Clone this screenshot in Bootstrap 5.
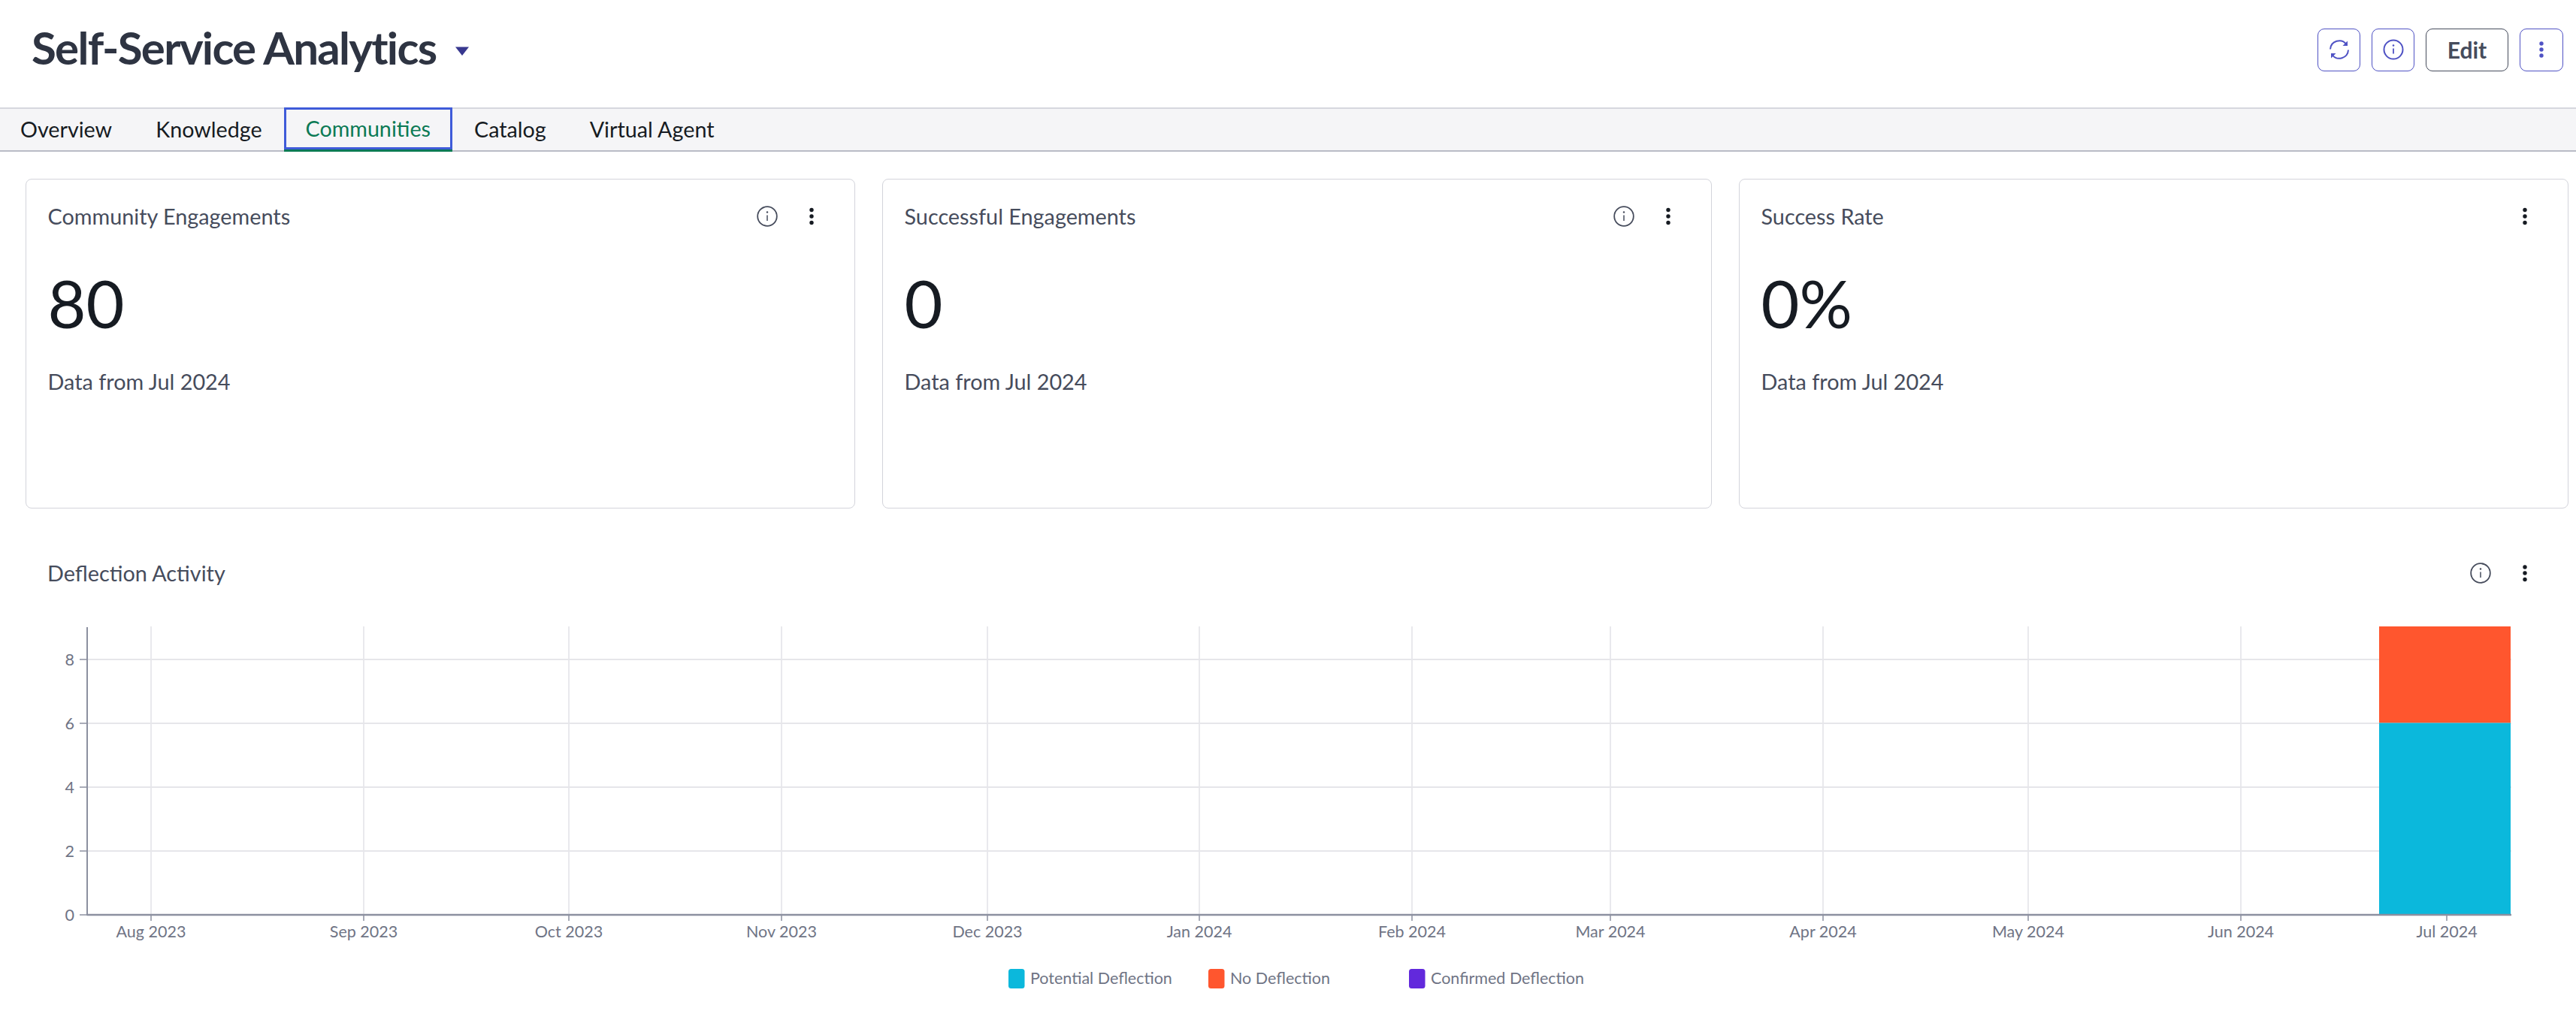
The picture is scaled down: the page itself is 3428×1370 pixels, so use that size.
<!DOCTYPE html>
<html lang="en">
<head>
<meta charset="utf-8">
<title>Self-Service Analytics</title>
<link href="https://cdn.jsdelivr.net/npm/bootstrap@5.3.0/dist/css/bootstrap.min.css" rel="stylesheet">
<style>
html,body{background:#fff;margin:0;overflow:hidden;}
body{font-family:"Lato","Liberation Sans",sans-serif;color:#161b22;width:3428px;height:1370px;}
.head-bar{height:143px;padding:0 17px 0 42px;}
.title-wrap{margin-top:-18px;}
.page-title{font-size:60px;font-weight:700;color:#2e3442;margin:0;line-height:1;letter-spacing:-1.700px;}
.caret-ic{margin-left:26px;margin-top:10px;}
.tool-btn{width:57px;height:57px;padding:0;border:1.500px solid #4f52c4;border-radius:9px;background:#fff;display:flex;align-items:center;justify-content:center;}
.tool-btn.edit-btn{width:110px;border-color:#464c5c;color:#464c5c;font-size:30px;font-weight:700;line-height:1;}
.tool-btn.more-btn{width:58px;}
.head-tools{gap:15px;margin-top:-11px;}
.tab-strip{height:59px;background:#f5f5f7;border-top:2px solid #d6d7de;border-bottom:2px solid #b9bbc6;flex-wrap:nowrap;}
.tab-strip .nav-link{color:#161b22;font-size:28.700px;line-height:1;height:55px;padding:0 29px;border-radius:0;display:flex;align-items:center;}
.tab-strip .nav-link:first-child{margin-left:-2px;}
.tab-strip .nav-link.picked{color:#0b7a55;height:59px;margin-top:-2px;margin-bottom:-2px;box-shadow:inset 0 0 0 3px #3f5bd9;border-bottom:3px solid #0b7a55;}
.stat-row{display:grid;grid-template-columns:repeat(3,1fr);gap:36px;padding:36px 10px 0 34px;}
.stat-box{height:439px;border:1.500px solid #d3d4db;border-radius:8px;padding:0;}
.stat-top{height:98px;padding:0 52px 0 28.500px;}
.box-name{font-size:28.800px;color:#464c5c;margin:0;line-height:1;}
.ic-pair{gap:40px;}
.big-num{font-size:88px;line-height:1;padding-left:28.500px;color:#161b22;margin-top:22px;}
.data-note{font-size:28.800px;line-height:1;color:#464c5c;padding-left:28.500px;margin-top:47px;}
.defl-head{height:78px;padding:0 63px 0 63px;margin-top:47px;}
.chart-svg{display:block;}
.tick-txt{font-family:"Lato","Liberation Sans",sans-serif;font-size:21.500px;fill:#6f7485;}
</style>
</head>
<body>
<header class="head-bar d-flex align-items-center justify-content-between">
  <div class="title-wrap d-flex align-items-center">
    <h1 class="page-title">Self-Service Analytics</h1>
    <svg class="caret-ic" width="18" height="12" viewBox="0 0 18 12"><path d="M0 .500h18L9 12z" fill="#38388f"/></svg>
  </div>
  <div class="head-tools d-flex align-items-center">
    <button class="btn tool-btn" type="button" aria-label="Refresh">
      <svg width="30" height="30" viewBox="0 0 30 30" fill="none" stroke="#4f52c4" stroke-width="2"><path d="M3 14.500A12 12 0 0 1 24.500 8"/><path d="M27 15.500A12 12 0 0 1 5.500 22"/><path d="M26 3.500V10h-6.500z" fill="#4f52c4" stroke="none"/><path d="M4 26.500V20h6.500z" fill="#4f52c4" stroke="none"/></svg>
    </button>
    <button class="btn tool-btn" type="button" aria-label="Info">
      <svg width="30" height="30" viewBox="0 0 30 30" fill="none" stroke="#4f52c4" stroke-width="2"><circle cx="15" cy="15" r="12.500"/><path d="M15 13.500v7" stroke-width="1.800"/><circle cx="15" cy="9.500" r="1.300" fill="#4f52c4" stroke="none"/></svg>
    </button>
    <button class="btn tool-btn edit-btn" type="button">Edit</button>
    <button class="btn tool-btn more-btn" type="button" aria-label="More">
      <svg width="10" height="26" viewBox="0 0 10 26" fill="#4f52c4"><circle cx="5" cy="5" r="2.700"/><circle cx="5" cy="13" r="2.700"/><circle cx="5" cy="21" r="2.700"/></svg>
    </button>
  </div>
</header>

<nav class="nav tab-strip">
  <a class="nav-link" href="#">Overview</a>
  <a class="nav-link" href="#">Knowledge</a>
  <a class="nav-link picked" href="#">Communities</a>
  <a class="nav-link" href="#">Catalog</a>
  <a class="nav-link" href="#">Virtual Agent</a>
</nav>

<section class="stat-row">
  <div class="card stat-box">
    <div class="stat-top d-flex align-items-center justify-content-between">
      <h2 class="box-name fw-normal">Community Engagements</h2>
      <div class="ic-pair d-flex align-items-center">
        <svg width="28" height="28" viewBox="0 0 28 28" fill="none" stroke="#464c5c" stroke-width="1.800"><circle cx="14" cy="14" r="12.800"/><path d="M14 12.500v7.500" stroke-width="1.500"/><circle cx="14" cy="8.500" r="1.200" fill="#464c5c" stroke="none"/></svg>
        <svg width="10" height="26" viewBox="0 0 10 26" fill="#161b22"><circle cx="5" cy="4.500" r="2.700"/><circle cx="5" cy="13" r="2.700"/><circle cx="5" cy="21.500" r="2.700"/></svg>
      </div>
    </div>
    <div class="big-num">80</div>
    <div class="data-note">Data from Jul 2024</div>
  </div>
  <div class="card stat-box">
    <div class="stat-top d-flex align-items-center justify-content-between">
      <h2 class="box-name fw-normal">Successful Engagements</h2>
      <div class="ic-pair d-flex align-items-center">
        <svg width="28" height="28" viewBox="0 0 28 28" fill="none" stroke="#464c5c" stroke-width="1.800"><circle cx="14" cy="14" r="12.800"/><path d="M14 12.500v7.500" stroke-width="1.500"/><circle cx="14" cy="8.500" r="1.200" fill="#464c5c" stroke="none"/></svg>
        <svg width="10" height="26" viewBox="0 0 10 26" fill="#161b22"><circle cx="5" cy="4.500" r="2.700"/><circle cx="5" cy="13" r="2.700"/><circle cx="5" cy="21.500" r="2.700"/></svg>
      </div>
    </div>
    <div class="big-num">0</div>
    <div class="data-note">Data from Jul 2024</div>
  </div>
  <div class="card stat-box">
    <div class="stat-top d-flex align-items-center justify-content-between">
      <h2 class="box-name fw-normal">Success Rate</h2>
      <div class="ic-pair d-flex align-items-center">
        <svg width="10" height="26" viewBox="0 0 10 26" fill="#161b22"><circle cx="5" cy="4.500" r="2.700"/><circle cx="5" cy="13" r="2.700"/><circle cx="5" cy="21.500" r="2.700"/></svg>
      </div>
    </div>
    <div class="big-num">0%</div>
    <div class="data-note">Data from Jul 2024</div>
  </div>
</section>

<section>
  <div class="defl-head d-flex align-items-center justify-content-between">
    <h2 class="box-name fw-normal">Deflection Activity</h2>
    <div class="ic-pair d-flex align-items-center">
      <svg width="28" height="28" viewBox="0 0 28 28" fill="none" stroke="#464c5c" stroke-width="1.800"><circle cx="14" cy="14" r="12.800"/><path d="M14 12.500v7.500" stroke-width="1.500"/><circle cx="14" cy="8.500" r="1.200" fill="#464c5c" stroke="none"/></svg>
      <svg width="10" height="26" viewBox="0 0 10 26" fill="#161b22"><circle cx="5" cy="5" r="2.700"/><circle cx="5" cy="13" r="2.700"/><circle cx="5" cy="21.500" r="2.700"/></svg>
    </div>
  </div>
  <svg id="chart" class="chart-svg" width="3428" height="569" viewBox="0 801 3428 569"></svg>
</section>

<script>
const NS='http://www.w3.org/2000/svg',s=document.getElementById('chart');
function add(t,a,txt){const e=document.createElementNS(NS,t);for(const k in a)e.setAttribute(k,a[k]);if(txt!==undefined)e.textContent=txt;s.appendChild(e);return e;}
const months=[['Aug 2023',201],['Sep 2023',484],['Oct 2023',757],['Nov 2023',1040],['Dec 2023',1314],['Jan 2024',1596],['Feb 2024',1879],['Mar 2024',2143],['Apr 2024',2426],['May 2024',2699],['Jun 2024',2982],['Jul 2024',3256]];
months.forEach(([l,x])=>{
  add('line',{x1:x,x2:x,y1:833,y2:1217,stroke:'#e2e2e7','stroke-width':1.500});
});
[2,4,6,8].forEach(v=>{const y=1217-v*42.5;add('line',{x1:116,x2:3342,y1:y,y2:y,stroke:'#e6e6ea','stroke-width':2});});
add('rect',{x:3166,y:833,width:175,height:128.500,fill:'#ff562e'});
add('rect',{x:3166,y:961.500,width:175,height:255.500,fill:'#0bb8dc'});
add('line',{x1:116,x2:116,y1:834,y2:1218,stroke:'#8c90a0','stroke-width':2});
add('line',{x1:116,x2:3342,y1:1217,y2:1217,stroke:'#8c90a0','stroke-width':2.500});
months.forEach(([l,x])=>{
  add('line',{x1:x,x2:x,y1:1217,y2:1225,stroke:'#8c90a0','stroke-width':1.500});
  add('text',{x:x,y:1247,'text-anchor':'middle',class:'tick-txt'},l);
});
[0,2,4,6,8].forEach(v=>{const y=1217-v*42.5;
  add('line',{x1:106,x2:116,y1:y,y2:y,stroke:'#8c90a0','stroke-width':1.500});
  add('text',{x:99,y:y+8,'text-anchor':'end',class:'tick-txt'},v);
});
[['Potential Deflection',1342,'#0bb8dc'],['No Deflection',1608,'#ff562e'],['Confirmed Deflection',1875,'#6229dc']].forEach(([l,x,c])=>{
  add('rect',{x:x,y:1289,width:21.500,height:26,rx:3.500,fill:c});
  add('text',{x:x+29,y:1309,class:'tick-txt'},l);
});
</script>
<script src="https://cdn.jsdelivr.net/npm/bootstrap@5.3.0/dist/js/bootstrap.bundle.min.js"></script>
</body>
</html>
